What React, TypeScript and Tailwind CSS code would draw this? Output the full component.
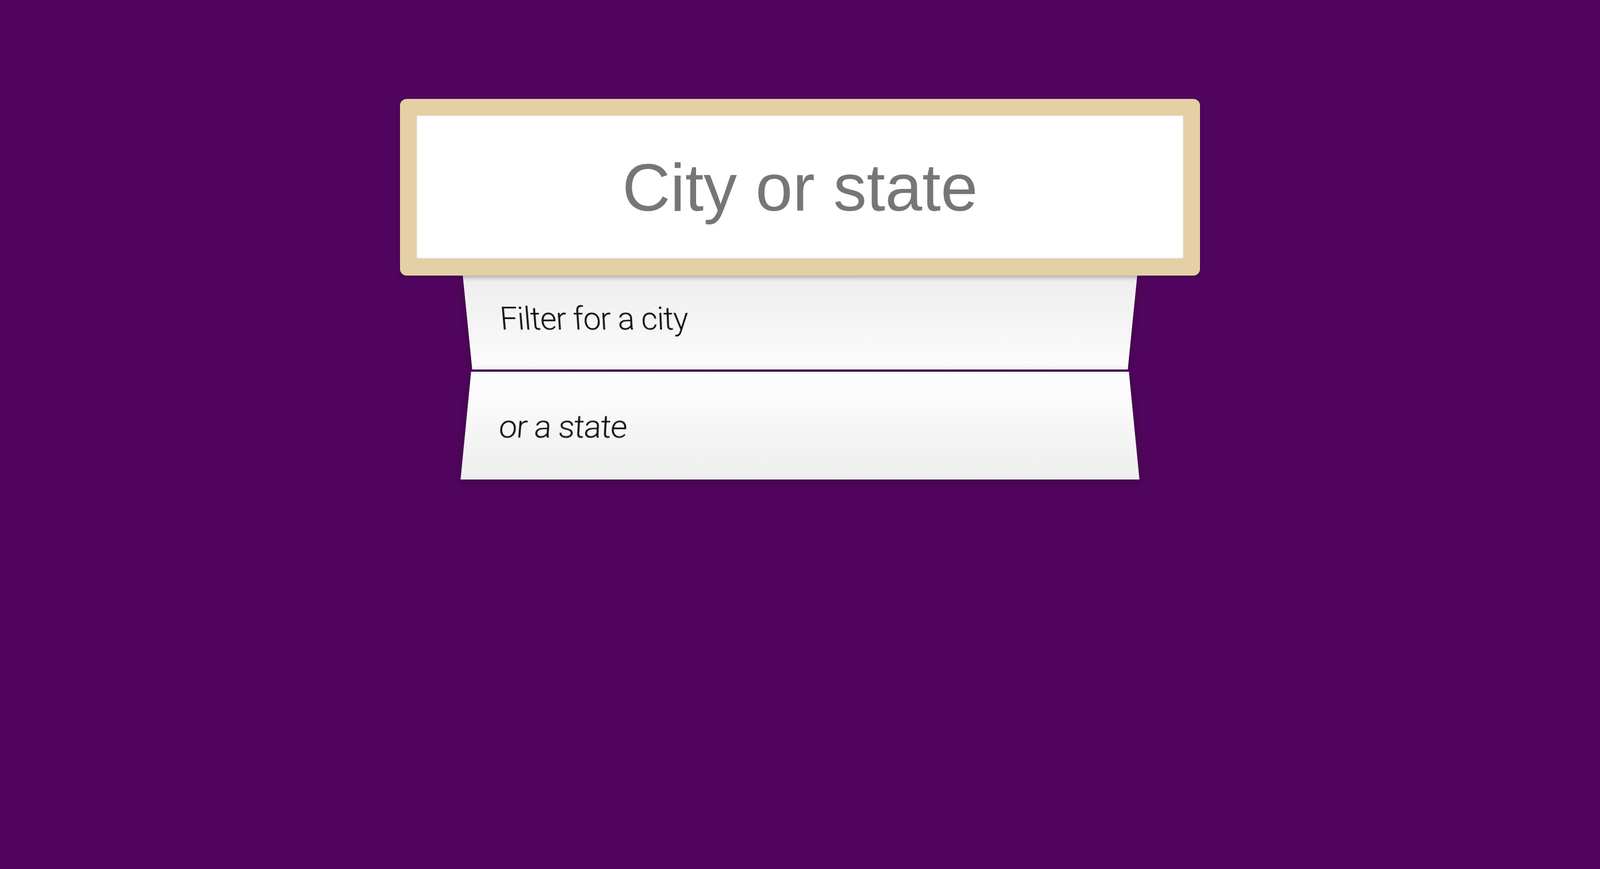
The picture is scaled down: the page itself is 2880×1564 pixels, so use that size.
import React from "react";

export default function App() {
  return (
    <div className="min-h-screen w-full bg-[#52055e] flex flex-col items-center pt-[178px]">
      <div className="w-[1440px] h-[318px] rounded-[12px] bg-[#e5cfa5] pt-[30px] pb-[31px] px-[30px] relative z-10 shadow-[0_3px_8px_rgba(0,0,0,0.25)]">
        <div className="h-full w-full bg-white shadow-[inset_0_0_3px_rgba(0,0,0,0.18)] flex items-center justify-center">
          <span className="font-['Liberation_Sans',Arial,sans-serif] text-[120px] leading-none text-[#767676]">
            City or state
          </span>
        </div>
      </div>
      <div className="flex flex-col items-center gap-[4px]">
        <div className="w-[1214px] h-[169px] origin-top [transform:matrix3d(1,0,0,0,0,1.028814,0,0.0001705,0,0,1,0,0,0,0,1)] bg-[linear-gradient(to_bottom,#e2e2e2_0px,#efefef_10px,#f3f3f3_40%,#fdfdfd_100%)] shadow-[0_4px_18px_rgba(0,0,0,0.3)] pl-[60px] pt-[47px]">
          <span className="font-['Roboto',sans-serif] font-light text-[58px] tracking-[-1.1px] leading-none text-[#0a0a0a]">
            Filter for a city
          </span>
        </div>
        <div className="w-[1184px] h-[194px] origin-top [transform:matrix3d(1,0,0,0,0,0.96891,0,-0.00016026,0,0,1,0,0,0,0,1)] bg-[linear-gradient(to_bottom,#fbfbfb_0%,#fdfdfd_20%,#f4f4f4_60%,#eeeeee_100%)] shadow-[0_4px_18px_rgba(0,0,0,0.3)] pl-[59px] pt-[71px]">
          <span className="font-['Roboto',sans-serif] font-light text-[58px] tracking-[-1.3px] leading-none text-[#0a0a0a]">
            or a state
          </span>
        </div>
      </div>
    </div>
  );
}
